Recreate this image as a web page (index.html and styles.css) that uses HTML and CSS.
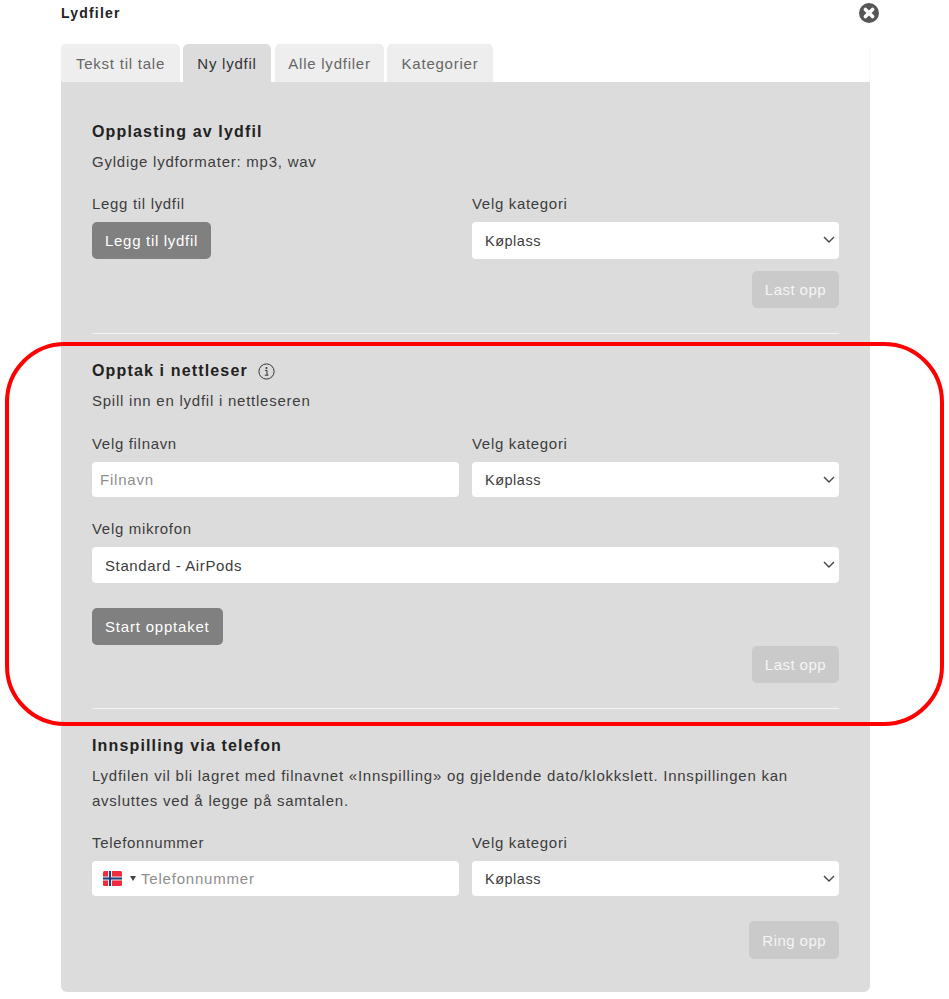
FILE: index.html
```html
<!DOCTYPE html>
<html lang="en">
  <head>
    <meta charset="UTF-8" />
    <meta name="viewport" content="width=device-width, initial-scale=1.0" />
    <title>Lydfiler</title>
    <link rel="stylesheet" href="styles.css">
  </head>
  <body>
    <div class="modal">
      <div class="modal-head">
        <h2>Lydfiler</h2>
        <svg class="close" width="20" height="20" viewBox="0 0 20 20">
          <circle cx="10" cy="10" r="10" fill="#565656" />
          <path d="M6.4 6.4 L13.6 13.6 M13.6 6.4 L6.4 13.6" stroke="#fff" stroke-width="3.6" stroke-linecap="round" />
        </svg>
      </div>

      <div class="tabs">
        <div class="tab tab-1">Tekst til tale</div>
        <div class="tab tab-2 active">Ny lydfil</div>
        <div class="tab tab-3">Alle lydfiler</div>
        <div class="tab tab-4">Kategorier</div>
      </div>

      <div class="panel">
        <section class="upload">
          <h3>Opplasting av lydfil</h3>
          <p class="intro">Gyldige lydformater: mp3, wav</p>
          <div class="row">
            <div class="form-group">
              <label>Legg til lydfil</label>
              <button class="btn btn-add">Legg til lydfil</button>
            </div>
            <div class="form-group">
              <label>Velg kategori</label>
              <div class="select-wrap tall">
                <select><option>Køplass</option></select>
                <svg class="chevron" width="12" height="7" viewBox="0 0 12 7"><path d="M1 1 L6 6 L11 1" fill="none" stroke="#444" stroke-width="1.4" /></svg>
              </div>
            </div>
          </div>
          <div class="actions first-actions">
            <button class="btn btn-off">Last opp</button>
          </div>
        </section>

        <hr class="line-1" />

        <section class="record">
          <h3>Opptak i nettleser
            <svg class="info" width="17" height="17" viewBox="0 0 17 17">
              <circle cx="8.5" cy="8.5" r="7.6" fill="none" stroke="#333" stroke-width="1" />
              <circle cx="8.5" cy="5" r="1" fill="#333" />
              <path d="M7 7.4 H9 V12 M6.8 12.2 H10.4" fill="none" stroke="#333" stroke-width="1" />
            </svg>
          </h3>
          <p class="intro">Spill inn en lydfil i nettleseren</p>
          <div class="row">
            <div class="form-group">
              <label>Velg filnavn</label>
              <input type="text" placeholder="Filnavn" />
            </div>
            <div class="form-group">
              <label>Velg kategori</label>
              <div class="select-wrap">
                <select><option>Køplass</option></select>
                <svg class="chevron" width="12" height="7" viewBox="0 0 12 7"><path d="M1 1 L6 6 L11 1" fill="none" stroke="#444" stroke-width="1.4" /></svg>
              </div>
            </div>
          </div>
          <div class="form-group mic">
            <label>Velg mikrofon</label>
            <div class="select-wrap mic-select">
              <select><option>Standard - AirPods</option></select>
              <svg class="chevron" width="12" height="7" viewBox="0 0 12 7"><path d="M1 1 L6 6 L11 1" fill="none" stroke="#444" stroke-width="1.4" /></svg>
            </div>
          </div>
          <button class="btn btn-start">Start opptaket</button>
          <div class="actions">
            <button class="btn btn-off">Last opp</button>
          </div>
        </section>

        <hr class="line-2" />

        <section class="phone">
          <h3>Innspilling via telefon</h3>
          <p class="intro long">Lydfilen vil bli lagret med filnavnet «Innspilling» og gjeldende dato/klokkslett. Innspillingen kan avsluttes ved å legge på samtalen.</p>
          <div class="row">
            <div class="form-group">
              <label>Telefonnummer</label>
              <div class="phone-input">
                <svg class="flag" width="19" height="15" viewBox="0 0 19 15">
                  <rect width="19" height="15" rx="1.5" fill="#ef2b3c" />
                  <path d="M0 7.5 H19 M7 0 V15" stroke="#e6e6ef" stroke-width="4" />
                  <path d="M0 7.5 H19 M7 0 V15" stroke="#1f3f7a" stroke-width="2" />
                </svg>
                <span class="caret"></span>
                <input type="text" placeholder="Telefonnummer" />
              </div>
            </div>
            <div class="form-group">
              <label>Velg kategori</label>
              <div class="select-wrap">
                <select><option>Køplass</option></select>
                <svg class="chevron" width="12" height="7" viewBox="0 0 12 7"><path d="M1 1 L6 6 L11 1" fill="none" stroke="#444" stroke-width="1.4" /></svg>
              </div>
            </div>
          </div>
          <div class="actions ring">
            <button class="btn btn-off">Ring opp</button>
          </div>
        </section>
      </div>
    </div>

    <div class="highlight"></div>
  </body>
</html>
```

FILE: styles.css
```css
* {
  box-sizing: border-box;
}
body {
  margin: 0;
  background: #fff;
  font-family: "Liberation Sans", Arial, sans-serif;
  font-size: 15px;
  color: #3c3c3c;
  letter-spacing: 0.76px;
}
.modal {
  width: 809px;
  margin-left: 61px;
}
.modal-head {
  height: 44px;
  display: flex;
  justify-content: space-between;
  align-items: flex-start;
}
.modal-head h2 {
  margin: 5px 0 0;
  font-size: 14px;
  line-height: 16px;
  font-weight: bold;
  color: #222;
  letter-spacing: 1.2px;
}
.close {
  margin: 3px -9px 0 0;
}
.tabs {
  display: flex;
  height: 38px;
  border-right: 1px solid #f9f9f9;
}
.tab {
  height: 38px;
  line-height: 40px;
  text-align: center;
  background: #eee;
  color: #666;
  border-radius: 5px 5px 0 0;
}
.tab-1 {
  width: 119px;
  margin-right: 3px;
}
.tab-2 {
  width: 88px;
  margin-right: 4px;
}
.tab-3 {
  width: 109px;
  margin-right: 3px;
}
.tab-4 {
  width: 106px;
}
.tab.active {
  background: #dcdcdc;
  color: #333;
}
.panel {
  height: 910px;
  padding: 0 31px;
  background: #dcdcdc;
  border-radius: 0 0 6px 6px;
}
.upload {
  padding-top: 40px;
}
h3 {
  margin: 0;
  height: 20px;
  display: flex;
  align-items: center;
  gap: 10px;
  font-size: 16px;
  line-height: 20px;
  font-weight: bold;
  color: #222;
  letter-spacing: 1.15px;
}
.intro {
  margin: 10px 0 0;
  height: 20px;
  line-height: 20px;
}
.intro.long {
  height: 50px;
  line-height: 25px;
  margin-top: 7px;
}
.row {
  display: grid;
  grid-template-columns: 367px 367px;
  column-gap: 13px;
  margin-top: 24px;
}
label {
  display: block;
  height: 18px;
  line-height: 18px;
  letter-spacing: 0.68px;
}
.upload .row {
  margin-top: 23px;
}
.phone .row {
  margin-top: 21px;
}
input,
select {
  width: 100%;
  height: 35px;
  border: none;
  border-radius: 4px;
  background: #fff;
  font-family: inherit;
  font-size: 15px;
  letter-spacing: 0.8px;
  color: #3c3c3c;
  outline: none;
}
.form-group input,
.select-wrap,
.phone-input,
.btn-add {
  margin-top: 9px;
}
input {
  padding: 0 8px;
}
input::placeholder {
  color: #8e8e8e;
  opacity: 1;
}
select {
  appearance: none;
  padding: 0 13px;
  font-size: 14.5px;
  letter-spacing: 0.5px;
}
.select-wrap {
  position: relative;
}
.select-wrap.tall select {
  height: 37px;
}
.mic-select select {
  height: 36px;
  font-size: 15px;
  letter-spacing: 0.62px;
}
.chevron {
  position: absolute;
  right: 4px;
  top: 14px;
}
.mic {
  margin-top: 23px;
}
.btn {
  display: block;
  height: 37px;
  padding: 0 13px;
  border: none;
  border-radius: 5px;
  font-family: inherit;
  font-size: 15px;
  letter-spacing: 0.8px;
  color: #fff;
}
.btn-add {
  letter-spacing: 0.7px;
}
.btn-add,
.btn-start {
  background: #808080;
}
.btn-start {
  margin-top: 25px;
}
.btn-off {
  background: #cacaca;
  color: #f5f5f5;
  letter-spacing: 0.45px;
}
.actions {
  display: flex;
  justify-content: flex-end;
  margin-top: 1px;
}
.first-actions {
  margin-top: 12px;
}
.ring {
  margin-top: 25px;
}
.ring .btn {
  height: 38px;
}
hr {
  margin: 0;
  border: none;
  height: 1px;
  background: #f3f3f3;
}
.line-1 {
  margin-top: 25px;
}
.record {
  padding-top: 27px;
}
.line-2 {
  margin-top: 25px;
}
.phone {
  padding-top: 27px;
}
.phone-input {
  display: flex;
  align-items: center;
  height: 35px;
  padding-left: 11px;
  background: #fff;
  border-radius: 4px;
}
.flag {
  flex: none;
}
.caret {
  flex: none;
  width: 0;
  height: 0;
  margin: 0 2px 0 8px;
  border-left: 3px solid transparent;
  border-right: 3px solid transparent;
  border-top: 5px solid #444;
}
.phone-input input {
  margin: 0;
  padding: 0 3px;
  flex: 1;
  min-width: 0;
  background: transparent;
}
.highlight {
  position: absolute;
  left: 5px;
  top: 342px;
  width: 939px;
  height: 384px;
  border: 4px solid #f00;
  border-radius: 60px;
  pointer-events: none;
}
```
